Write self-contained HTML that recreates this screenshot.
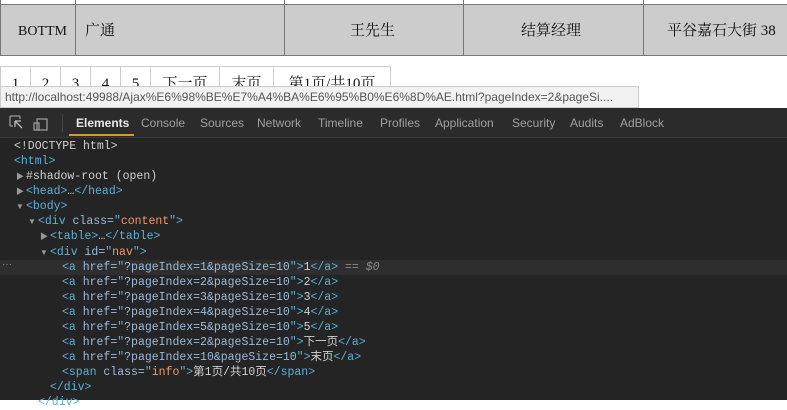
<!DOCTYPE html>
<html><head><meta charset="utf-8"><style>
body{margin:0;width:787px;height:400px;overflow:hidden;background:#fff;font-family:"Liberation Sans","Noto Sans CJK SC",sans-serif;position:relative}
.a{position:absolute}
.row{top:4px;left:0;width:787px;height:50px;background:#cccccc;border-top:1px solid #777;border-bottom:1px solid #777}
.v{position:absolute;width:1px;background:#777}
.cell{position:absolute;top:6px;height:51px;line-height:51px;font-size:15px;color:#111;font-family:"Liberation Serif","Noto Serif CJK SC",serif}
.pg{position:absolute;top:66px;height:32px;border:1px solid #ccc;font-size:15px;line-height:34px;text-align:center;color:#111;box-sizing:border-box;font-family:"Liberation Serif","Noto Serif CJK SC",serif}
.status{top:86px;left:0;width:639px;height:22px;background:#f2f2f2;border:1px solid #ccc;box-sizing:border-box;font-size:12px;line-height:20px;color:#555;padding-left:4px;white-space:nowrap;overflow:hidden}
.dt{top:108px;left:0;width:787px;height:292px;background:#242424}
.tb{top:108px;left:0;width:787px;height:29px;background:#2b2b2b;border-bottom:1px solid #3a3a3a}
.tab{position:absolute;top:108px;line-height:31px;font-size:12px;color:#a0a0a0}
.l{position:absolute;font-family:"Liberation Mono","Noto Sans CJK SC",monospace;font-size:11.5px;line-height:15px;color:#d0d0d0;white-space:pre}
.tri{position:absolute;font-size:8px;line-height:15px;color:#999}
.t{color:#5db0d7}.at{color:#9bbbdc}.s{color:#f29766}.g{color:#888}
</style></head><body>
<div class="a row"></div>
<div class="v" style="left:0;top:0;height:55px"></div>
<div class="v" style="left:75px;top:0;height:55px"></div>
<div class="v" style="left:284px;top:0;height:55px"></div>
<div class="v" style="left:463px;top:0;height:55px"></div>
<div class="v" style="left:643px;top:0;height:55px"></div>
<div class="cell" style="left:18px;font-size:14px">BOTTM</div>
<div class="cell" style="left:85px">广通</div>
<div class="cell" style="left:350px">王先生</div>
<div class="cell" style="left:521px">结算经理</div>
<div class="cell" style="left:667px">平谷嘉石大街 38</div>
<div class="pg" style="left:0;width:31px">1</div>
<div class="pg" style="left:30px;width:31px">2</div>
<div class="pg" style="left:60px;width:31px">3</div>
<div class="pg" style="left:90px;width:31px">4</div>
<div class="pg" style="left:120px;width:31px">5</div>
<div class="pg" style="left:150px;width:70px">下一页</div>
<div class="pg" style="left:219px;width:55px">末页</div>
<div class="pg" style="left:273px;width:118px">第1页/共10页</div>
<div class="a status">http://localhost:49988/Ajax%E6%98%BE%E7%A4%BA%E6%95%B0%E6%8D%AE.html?pageIndex=2&amp;pageSi....</div>
<div class="a dt"></div>
<div class="a tb"></div>
<svg class="a" style="left:9px;top:115px" width="42" height="16" viewBox="0 0 42 16" fill="none" stroke="#999" stroke-width="1.3"><path d="M1 1h10M1 1v10M1 11h3M11 1v3"/><path d="M6 6l7 7M6 6v6M6 6h6" stroke="#bbb"/><rect x="28" y="4" width="10" height="11"/><rect x="25" y="8" width="5" height="7"/></svg>
<div class="a" style="left:62px;top:114px;width:1px;height:18px;background:#444"></div>
<div class="tab" style="left:76px;color:#e8e8e8;font-weight:bold">Elements</div>
<div class="a" style="left:69px;top:134px;width:65px;height:2px;background:#d59a2f"></div>
<div class="tab" style="left:141px">Console</div>
<div class="tab" style="left:200px">Sources</div>
<div class="tab" style="left:257px">Network</div>
<div class="tab" style="left:318px">Timeline</div>
<div class="tab" style="left:380px">Profiles</div>
<div class="tab" style="left:435px">Application</div>
<div class="tab" style="left:512px">Security</div>
<div class="tab" style="left:570px">Audits</div>
<div class="tab" style="left:620px">AdBlock</div>
<div class="a" style="left:0;top:260px;width:787px;height:15px;background:#2e2e2e"></div>
<div class="a g" style="left:2px;top:259px;font-size:10px">···</div>

<div class="l" style="left:14px;top:139px">&lt;!DOCTYPE html&gt;</div>
<div class="l t" style="left:14px;top:154px">&lt;html&gt;</div>
<div class="tri" style="left:16px;top:169px">▶</div><div class="l" style="left:26px;top:169px">#shadow-root (open)</div>
<div class="tri" style="left:16px;top:184px">▶</div><div class="l" style="left:26px;top:184px"><span class="t">&lt;head&gt;</span>…<span class="t">&lt;/head&gt;</span></div>
<div class="tri" style="left:16px;top:199px">▼</div><div class="l t" style="left:26px;top:199px">&lt;body&gt;</div>
<div class="tri" style="left:28px;top:214px">▼</div><div class="l" style="left:38px;top:214px"><span class="t">&lt;div </span><span class="at">class=</span><span class="t">"</span><span class="s">content</span><span class="t">"&gt;</span></div>
<div class="tri" style="left:40px;top:229px">▶</div><div class="l" style="left:50px;top:229px"><span class="t">&lt;table&gt;</span>…<span class="t">&lt;/table&gt;</span></div>
<div class="tri" style="left:40px;top:245px">▼</div><div class="l" style="left:50px;top:245px"><span class="t">&lt;div </span><span class="at">id=</span><span class="t">"</span><span class="s">nav</span><span class="t">"&gt;</span></div>
<div class="l" style="left:62px;top:260px"><span class="t">&lt;a </span><span class="at">href=</span><span class="t">"</span><span class="at">?pageIndex=1&amp;pageSize=10</span><span class="t">"&gt;</span>1<span class="t">&lt;/a&gt;</span> <span class="g">== <i>$0</i></span></div>
<div class="l" style="left:62px;top:275px"><span class="t">&lt;a </span><span class="at">href=</span><span class="t">"</span><span class="at">?pageIndex=2&amp;pageSize=10</span><span class="t">"&gt;</span>2<span class="t">&lt;/a&gt;</span></div>
<div class="l" style="left:62px;top:290px"><span class="t">&lt;a </span><span class="at">href=</span><span class="t">"</span><span class="at">?pageIndex=3&amp;pageSize=10</span><span class="t">"&gt;</span>3<span class="t">&lt;/a&gt;</span></div>
<div class="l" style="left:62px;top:305px"><span class="t">&lt;a </span><span class="at">href=</span><span class="t">"</span><span class="at">?pageIndex=4&amp;pageSize=10</span><span class="t">"&gt;</span>4<span class="t">&lt;/a&gt;</span></div>
<div class="l" style="left:62px;top:320px"><span class="t">&lt;a </span><span class="at">href=</span><span class="t">"</span><span class="at">?pageIndex=5&amp;pageSize=10</span><span class="t">"&gt;</span>5<span class="t">&lt;/a&gt;</span></div>
<div class="l" style="left:62px;top:335px"><span class="t">&lt;a </span><span class="at">href=</span><span class="t">"</span><span class="at">?pageIndex=2&amp;pageSize=10</span><span class="t">"&gt;</span>下一页<span class="t">&lt;/a&gt;</span></div>
<div class="l" style="left:62px;top:350px"><span class="t">&lt;a </span><span class="at">href=</span><span class="t">"</span><span class="at">?pageIndex=10&amp;pageSize=10</span><span class="t">"&gt;</span>末页<span class="t">&lt;/a&gt;</span></div>
<div class="l" style="left:62px;top:365px"><span class="t">&lt;span </span><span class="at">class=</span><span class="t">"</span><span class="s">info</span><span class="t">"&gt;</span>第1页/共10页<span class="t">&lt;/span&gt;</span></div>
<div class="l t" style="left:50px;top:380px">&lt;/div&gt;</div>
<div class="l t" style="left:38px;top:395px">&lt;/div&gt;</div>
</body></html>
